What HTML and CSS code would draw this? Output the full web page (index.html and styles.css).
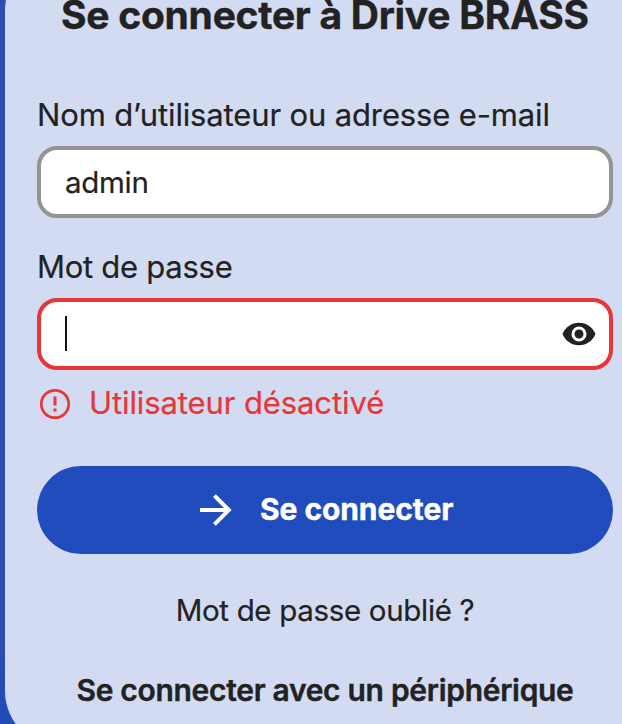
FILE: index.html
```html
<!DOCTYPE html>
<html lang="fr">
<head>
<meta charset="utf-8">
<title>Se connecter à Drive BRASS</title>
<link rel="stylesheet" href="styles.css">
</head>
<body>
<main class="card">
  <h1 class="title">Se connecter à Drive BRASS</h1>
  <div class="label">Nom d’utilisateur ou adresse e-mail</div>
  <div class="field"><span class="value">admin</span></div>
  <div class="label label-pass">Mot de passe</div>
  <div class="field field-error">
    <span class="caret"></span>
    <svg class="eye" viewBox="0 0 24 24" width="36" height="36"><path fill="currentColor" d="M12 9a3 3 0 0 0-3 3 3 3 0 0 0 3 3 3 3 0 0 0 3-3 3 3 0 0 0-3-3m0 8a5 5 0 0 1-5-5 5 5 0 0 1 5-5 5 5 0 0 1 5 5 5 5 0 0 1-5 5m0-12.5C7 4.500 2.730 7.610 1 12c1.730 4.390 6 7.500 11 7.500s9.270-3.110 11-7.500c-1.730-4.390-6-7.500-11-7.500z"/></svg>
  </div>
  <div class="error">
    <svg class="alert" viewBox="0 0 36 36" width="36" height="36"><circle cx="18" cy="18" r="13.700" fill="none" stroke="currentColor" stroke-width="2.700"/><path fill="currentColor" d="M16.500 10.500h3v9h-3zM16.500 22.500h3v3h-3z"/></svg>
    <span class="error-text">Utilisateur désactivé</span>
  </div>
  <div class="submit">
    <svg class="arrow" viewBox="0 0 24 24" width="48" height="48"><path fill="currentColor" d="M4 11v2h12l-5.500 5.500 1.420 1.420L19.840 12l-7.920-7.920L10.500 5.500 16 11z"/></svg>
    <span class="submit-text">Se connecter</span>
  </div>
  <div class="link">Mot de passe oublié ?</div>
  <div class="link link-strong">Se connecter avec un périphérique</div>
</main>
</body>
</html>
```
FILE: styles.css
```css
* { box-sizing: border-box; }
html { height: 100%; overflow: hidden; }
body {
  margin: 0;
  height: 724px;
  overflow: hidden;
  background: linear-gradient(#2c4faf 0, #2b4eaf 650px, #214bb9 724px);
  font-family: Inter, "Liberation Sans", sans-serif;
  color: #222;
}
.card {
  display: flex;
  flex-direction: column;
  width: 640px;
  height: 793px;
  margin: -46px 0 0 5px;
  padding: 39px 32px 0;
  border-radius: 56px;
  background: #d3dbf2;
  white-space: nowrap;
}
.title {
  margin: 0 0 58px;
  height: 44px;
  line-height: 44px;
  font-size: 39px;
  font-weight: 700;
  letter-spacing: -0.27px;
  text-align: center;
  -webkit-text-stroke: 0.4px currentColor;
}
.label {
  height: 40px;
  margin-bottom: 11px;
  line-height: 40px;
  font-size: 31px;
  letter-spacing: -0.14px;
  -webkit-text-stroke: 0.2px currentColor;
}
.label-pass { letter-spacing: -0.27px; }
.field {
  display: flex;
  align-items: center;
  height: 72px;
  margin-bottom: 29px;
  padding: 0 12px 0 24px;
  border: 4px solid #949494;
  border-radius: 20px;
  background: #fff;
  font-size: 29.5px;
  letter-spacing: -0.3px;
  -webkit-text-stroke: 0.2px currentColor;
}
.field-error {
  justify-content: space-between;
  border-color: #e73635;
  margin-bottom: 14px;
}
.caret { width: 2px; height: 35px; margin-bottom: 1px; background: #111; }
.error {
  display: flex;
  align-items: center;
  gap: 16px;
  height: 40px;
  margin-bottom: 42px;
  color: #e73635;
  font-size: 31px;
  letter-spacing: -0.1px;
  -webkit-text-stroke: 0.2px currentColor;
}
.error-text { margin-bottom: 3px; }
.submit {
  display: flex;
  align-items: center;
  height: 88px;
  padding-left: 155px;
  gap: 20px;
  border-radius: 44px;
  background: #204cbd;
  color: #fff;
  font-size: 30px;
  font-weight: 700;
  letter-spacing: -0.08px;
  -webkit-text-stroke: 0.4px currentColor;
}
.submit-text { margin-bottom: 2px; }
.link {
  height: 40px;
  margin-top: 36px;
  line-height: 40px;
  font-size: 29.5px;
  letter-spacing: -0.32px;
  text-align: center;
  -webkit-text-stroke: 0.2px currentColor;
}
.link-strong {
  margin-top: 40px;
  font-size: 30px;
  font-weight: 600;
  letter-spacing: -0.3px;
  -webkit-text-stroke: 0.4px currentColor;
}
```
